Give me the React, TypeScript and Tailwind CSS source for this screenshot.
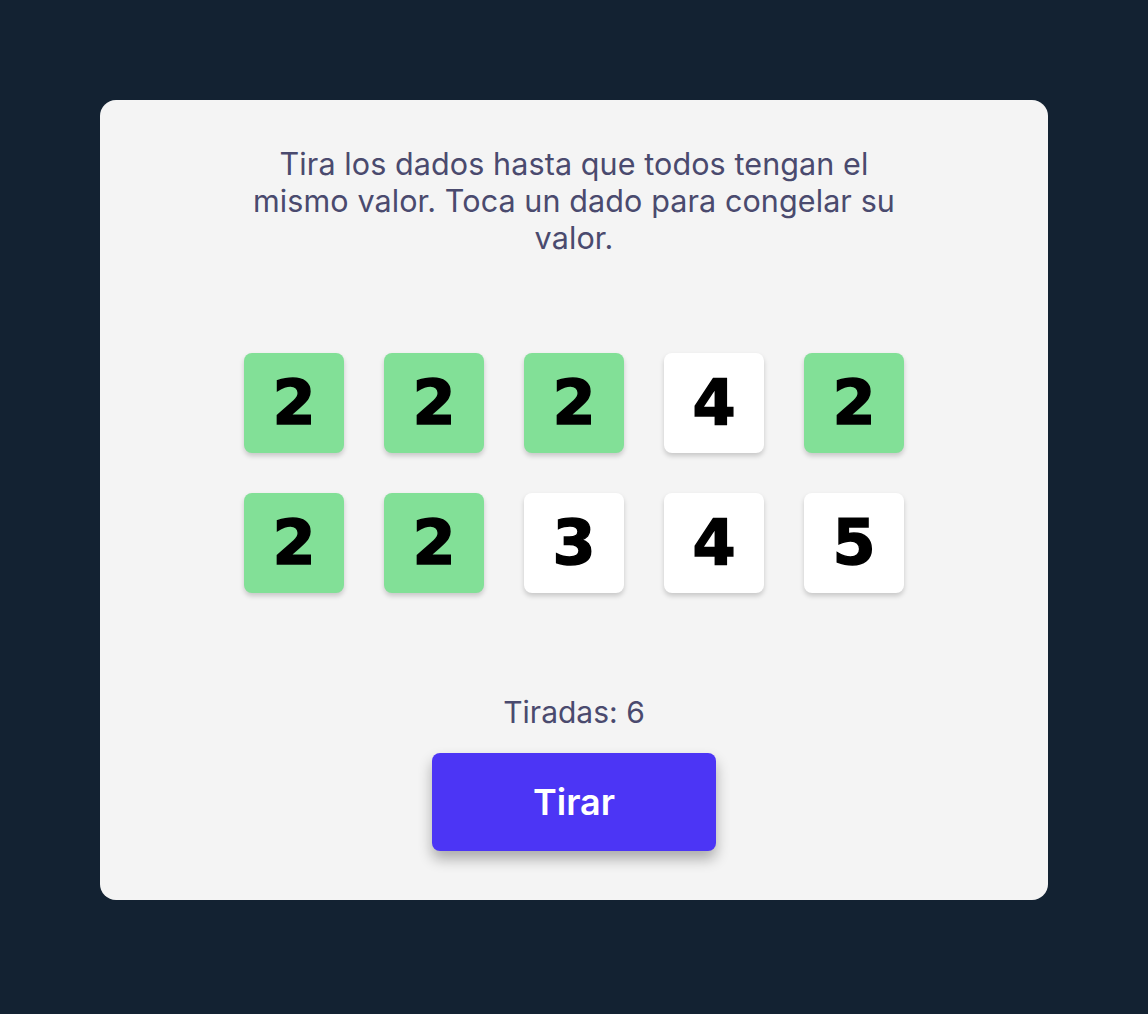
import React from "react";

const dice: { v: number; frozen: boolean }[] = [
  { v: 2, frozen: true },
  { v: 2, frozen: true },
  { v: 2, frozen: true },
  { v: 4, frozen: false },
  { v: 2, frozen: true },
  { v: 2, frozen: true },
  { v: 2, frozen: true },
  { v: 3, frozen: false },
  { v: 4, frozen: false },
  { v: 5, frozen: false },
];

export default function App() {
  return (
    <div className="min-h-screen bg-[#132232] px-[100px] pt-[100px] pb-[114px]">
      <div
        className="rounded-[16px] bg-[#f4f4f4] pt-[45px] pb-[49px] flex flex-col items-center"
        style={{ fontFamily: "Inter, 'Noto Sans', sans-serif" }}
      >
        <p className="max-w-[670px] text-center text-[30.5px] leading-[37px] tracking-[0.1px] text-[#4a4a6e]">
          Tira los dados hasta que todos tengan el mismo valor. Toca un dado para congelar su valor.
        </p>
        <div className="mt-[97px] grid grid-cols-5 gap-[40px]">
          {dice.map((d, i) => (
            <button
              key={i}
              className={`w-[100px] h-[100px] rounded-[8px] flex items-center justify-center shadow-[0_3px_5px_rgba(0,0,0,0.18)] ${
                d.frozen ? "bg-[#82e097]" : "bg-white"
              }`}
            >
              <span
                className="text-[62px] font-bold leading-none text-black [-webkit-text-stroke:1.5px_black]"
                style={{ fontFamily: "'DejaVu Sans', sans-serif" }}
              >
                {d.v}
              </span>
            </button>
          ))}
        </div>
        <div className="mt-[101px] text-[30px] leading-[36px] text-[#4a4a6e]">Tiradas: 6</div>
        <button className="mt-[23px] w-[284px] h-[98px] rounded-[8px] bg-[#4c35f5] text-white text-[36px] font-semibold shadow-[0_8px_14px_rgba(0,0,0,0.3)]">
          Tirar
        </button>
      </div>
    </div>
  );
}
